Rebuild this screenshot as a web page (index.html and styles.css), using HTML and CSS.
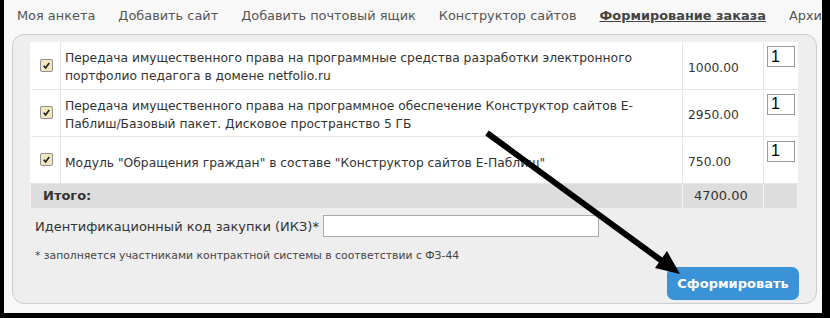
FILE: index.html
```html
<!DOCTYPE html>
<html lang="ru">
<head>
    <meta charset="UTF-8">
    <title>Формирование заказа</title>
    <link rel="stylesheet" href="styles.css">
</head>
<body>
<div class="frame">
    <div class="tabs">
        <a href="#">Моя анкета</a>
        <a href="#">Добавить сайт</a>
        <a href="#">Добавить почтовый ящик</a>
        <a href="#">Конструктор сайтов</a>
        <a href="#" class="active">Формирование заказа</a>
        <a href="#">Архив</a>
    </div>

    <div class="panel">
        <table class="order">
            <colgroup>
                <col class="c-check">
                <col class="c-name">
                <col class="c-price">
                <col class="c-qty">
            </colgroup>
            <tr>
                <td class="check"><span class="box"><svg viewBox="0 0 12 12"><path d="M3 6.2 L5 8.6 L9 3.2" /></svg></span></td>
                <td class="name">Передача имущественного права на программные средства разработки электронного портфолио педагога в домене netfolio.ru</td>
                <td class="price">1000.00</td>
                <td class="qty"><input type="text" value="1"></td>
            </tr>
            <tr>
                <td class="check"><span class="box"><svg viewBox="0 0 12 12"><path d="M3 6.2 L5 8.6 L9 3.2" /></svg></span></td>
                <td class="name">Передача имущественного права на программное обеспечение Конструктор сайтов Е-Паблиш/Базовый пакет. Дисковое пространство 5 ГБ</td>
                <td class="price">2950.00</td>
                <td class="qty"><input type="text" value="1"></td>
            </tr>
            <tr>
                <td class="check"><span class="box"><svg viewBox="0 0 12 12"><path d="M3 6.2 L5 8.6 L9 3.2" /></svg></span></td>
                <td class="name single">Модуль "Обращения граждан" в составе "Конструктор сайтов Е-Паблиш"</td>
                <td class="price">750.00</td>
                <td class="qty"><input type="text" value="1"></td>
            </tr>
            <tr class="total">
                <td colspan="2">Итого:</td>
                <td class="sum">4700.00</td>
                <td></td>
            </tr>
        </table>

        <div class="ikz">
            <label for="ikz">Идентификационный код закупки (ИКЗ)*</label>
            <input type="text" id="ikz">
        </div>
        <p class="note">* заполняется участниками контрактной системы в соответствии с ФЗ-44</p>

        <div class="actions">
            <button class="submit">Сформировать</button>
        </div>
    </div>
</div>

<svg class="arrow" width="830" height="318" viewBox="0 0 830 318">
    <line x1="487" y1="133" x2="662" y2="261" />
    <polygon points="680,274 655,268 667,251" />
</svg>
</body>
</html>
```

FILE: styles.css
```css
body {
    margin: 0;
    background: #000;
    font-family: "DejaVu Sans", Verdana, sans-serif;
    font-size: 13px;
    color: #333;
    position: relative;
    height: 318px;
    overflow: hidden;
}
.frame {
    margin: 0 8px 0 4px;
    height: 313px;
    background: #f8f8f8;
    overflow: hidden;
}
.tabs {
    display: flex;
    white-space: nowrap;
    overflow: hidden;
    height: 34px;
    padding: 8px 0 0 13px;
    box-sizing: border-box;
    font-size: 12.9px;
}
.tabs a {
    color: #555;
    text-decoration: none;
    margin-right: 23px;
}
.tabs a.active {
    color: #444;
    font-weight: bold;
    text-decoration: underline;
}
.panel {
    margin: 0 5px 0 8px;
    height: 270px;
    box-sizing: border-box;
    background: #eee;
    border: 1px solid #ccc;
    border-radius: 12px;
    padding: 7px 18px 0 17px;
}
.order {
    width: 100%;
    table-layout: fixed;
    border-collapse: collapse;
    background: #fff;
    font-size: 12.3px;
}
.c-check { width: 30px; }
.c-price { width: 81px; }
.c-qty { width: 34px; }
.order tr {
    height: 47px;
}
.order td {
    border: 1px solid #e6e6e6;
    padding: 0 5px;
    line-height: 18px;
    vertical-align: middle;
}
.order tr:first-child td { border-top: none; }
.order td:first-child { border-left: none; }
.order td:last-child { border-right: none; }
.order .check {
    padding: 0 0 0 9px;
}
.box {
    display: block;
    width: 11px;
    height: 11px;
    border: 1px solid #8f8f8f;
    border-radius: 2px;
    background: #f3e6bd;
}
.box svg {
    display: block;
    width: 11px;
    height: 11px;
    fill: none;
    stroke: #222;
    stroke-width: 1.8;
}
.order .name {
    padding: 4px 5px 0 4px;
}
.order .name.single {
    padding-top: 6px;
}
.order .price {
    padding: 5px 0 0 5px;
}
.order .qty {
    vertical-align: top;
    padding: 4px 0 0 3px;
}
.qty input {
    display: block;
    width: 28px;
    height: 21px;
    box-sizing: border-box;
    border: 1px solid #9a9a9a;
    padding: 0 3px;
    font-family: "Liberation Sans", Arial, sans-serif;
    font-size: 16px;
    color: #000;
    background: #fff;
}
.order .total {
    height: 25px;
}
.order .total td {
    background: #ddd;
    border: 1px solid #f2f2f2;
    border-bottom: none;
    border-top: none;
    font-size: 13px;
    font-weight: bold;
    padding: 0 0 0 12px;
}
.order .total td.sum {
    font-weight: normal;
    padding-left: 11px;
}
.ikz {
    display: flex;
    align-items: center;
    margin-top: 7px;
    padding-left: 5px;
    height: 22px;
}
.ikz label {
    margin-right: 4px;
}
.ikz input {
    width: 276px;
    height: 22px;
    box-sizing: border-box;
    border: 1px solid #aaa;
    background: #fff;
}
.note {
    margin: 12px 0 0 5px;
    font-size: 10.8px;
    color: #444;
}
.actions {
    display: flex;
    justify-content: flex-end;
    margin-top: 5px;
}
.submit {
    width: 132px;
    height: 33px;
    margin-right: -1px;
    background: #3a93d7;
    color: #fff;
    border: none;
    border-radius: 7px;
    font-family: "DejaVu Sans", Verdana, sans-serif;
    font-size: 13px;
    font-weight: bold;
}
.arrow {
    position: absolute;
    left: 0;
    top: 0;
    pointer-events: none;
}
.arrow line {
    stroke: #000;
    stroke-width: 6;
}
.arrow polygon {
    fill: #000;
}
```
